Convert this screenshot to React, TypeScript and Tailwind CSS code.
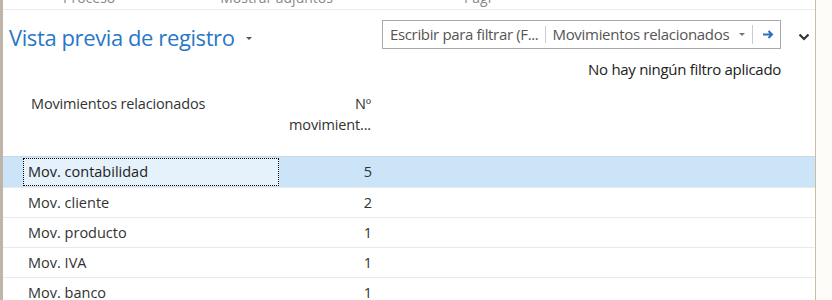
import React from "react";

const rows = [
  { name: "Mov. contabilidad", count: 5 },
  { name: "Mov. cliente", count: 2 },
  { name: "Mov. producto", count: 1 },
  { name: "Mov. IVA", count: 1 },
  { name: "Mov. banco", count: 1 },
];

export default function App() {
  return (
    <div className="flex h-[300px] w-[832px] overflow-hidden bg-[#fdfcf8] font-['Open_Sans',sans-serif] text-[#333]">
      <div className="w-[3px] shrink-0 bg-[#bdb5a5]" />
      <div className="flex w-[813px] shrink-0 flex-col border-r border-[#c9bf9f] bg-white">
        {/* action bar, scrolled out of view */}
        <div className="flex h-[10px] shrink-0 items-end overflow-hidden border-b border-[#ececec] text-[14px] leading-[20px] text-[#888]">
          <div className="mb-[1px] flex">
            <span className="ml-[60px]">Proceso</span>
            <span className="ml-[105px]">Mostrar adjuntos</span>
            <span className="ml-[131px]">Pagi</span>
          </div>
        </div>

        <div className="flex h-[69px] shrink-0 items-start pl-[6px] pt-[10px]">
          <div className="flex items-center pt-[3px]">
            <span className="text-[22px] leading-[28px] tracking-[-0.4px] text-[#2a77c6]">Vista previa de registro</span>
            <svg width="8" height="5" viewBox="0 0 8 5" className="ml-[10px] mt-[3px]">
              <path d="M1 1h6L4 4z" fill="#555" />
            </svg>
          </div>
          <div className="ml-auto flex flex-col items-end">
            <div className="flex items-center">
              <div className="flex h-[29px] w-[399px] items-center border border-[#aaa] text-[15px] text-[#555]">
                <span className="pl-[7px] pr-[7px] tracking-[-0.35px]">Escribir para filtrar (F...</span>
                <div className="h-[17px] w-px bg-[#ccc]" />
                <span className="pl-[6px] tracking-[-0.3px]">Movimientos relacionados</span>
                <svg width="8" height="5" viewBox="0 0 8 5" className="ml-[9px]">
                  <path d="M1 1h6L4 4z" fill="#777" />
                </svg>
                <div className="ml-[6px] h-[19px] w-px bg-[#ccc]" />
                <svg width="13" height="11" viewBox="0 0 13 11" className="ml-[9px]">
                  <path d="M1 5.5h9M6.5 2l3.5 3.5L6.5 9" stroke="#2e6fbe" strokeWidth="2" fill="none" />
                </svg>
              </div>
              <svg width="12" height="8" viewBox="0 0 12 8" className="ml-[17px] mr-[5px] mt-[5px]">
                <path d="M1.5 1.5 6 6l4.5-4.5" stroke="#333" strokeWidth="2.2" fill="none" />
              </svg>
            </div>
            <div className="mr-[34px] mt-[9px] text-[15px] tracking-[-0.3px] text-[#222]">No hay ningún filtro aplicado</div>
          </div>
        </div>

        {/* column headers */}
        <div className="flex h-[77px] shrink-0 items-start pt-[14px] text-[14.5px] leading-[21px] text-[#333]">
          <div className="w-[272px] pl-[28px] tracking-[-0.15px]">Movimientos relacionados</div>
          <div className="w-[96px] text-right tracking-[-0.15px]">
            <div>Nº</div>
            <div>movimient...</div>
          </div>
        </div>

        <div className="border-t border-[#c8d8e4]">
          {rows.map((r, i) => (
            <div
              key={r.name}
              className={
                i === 0
                  ? "flex h-[30px] items-center bg-[#cce4f7] text-[14.5px]"
                  : "flex h-[30px] items-center border-t border-[#e9e9e9] text-[14.5px]"
              }
            >
              <div className="flex h-full w-[280px] items-center pl-[20px]">
                <div
                  className={
                    i === 0
                      ? "flex h-[28px] w-[256px] items-center border border-dotted border-black bg-[#e5f1fb] pl-[4px] text-[#222]"
                      : "pl-[5px] text-[#333]"
                  }
                >
                  {r.name}
                </div>
              </div>
              <div className="w-[89px] text-right text-[#333]">{r.count}</div>
            </div>
          ))}
        </div>
      </div>
    </div>
  );
}
